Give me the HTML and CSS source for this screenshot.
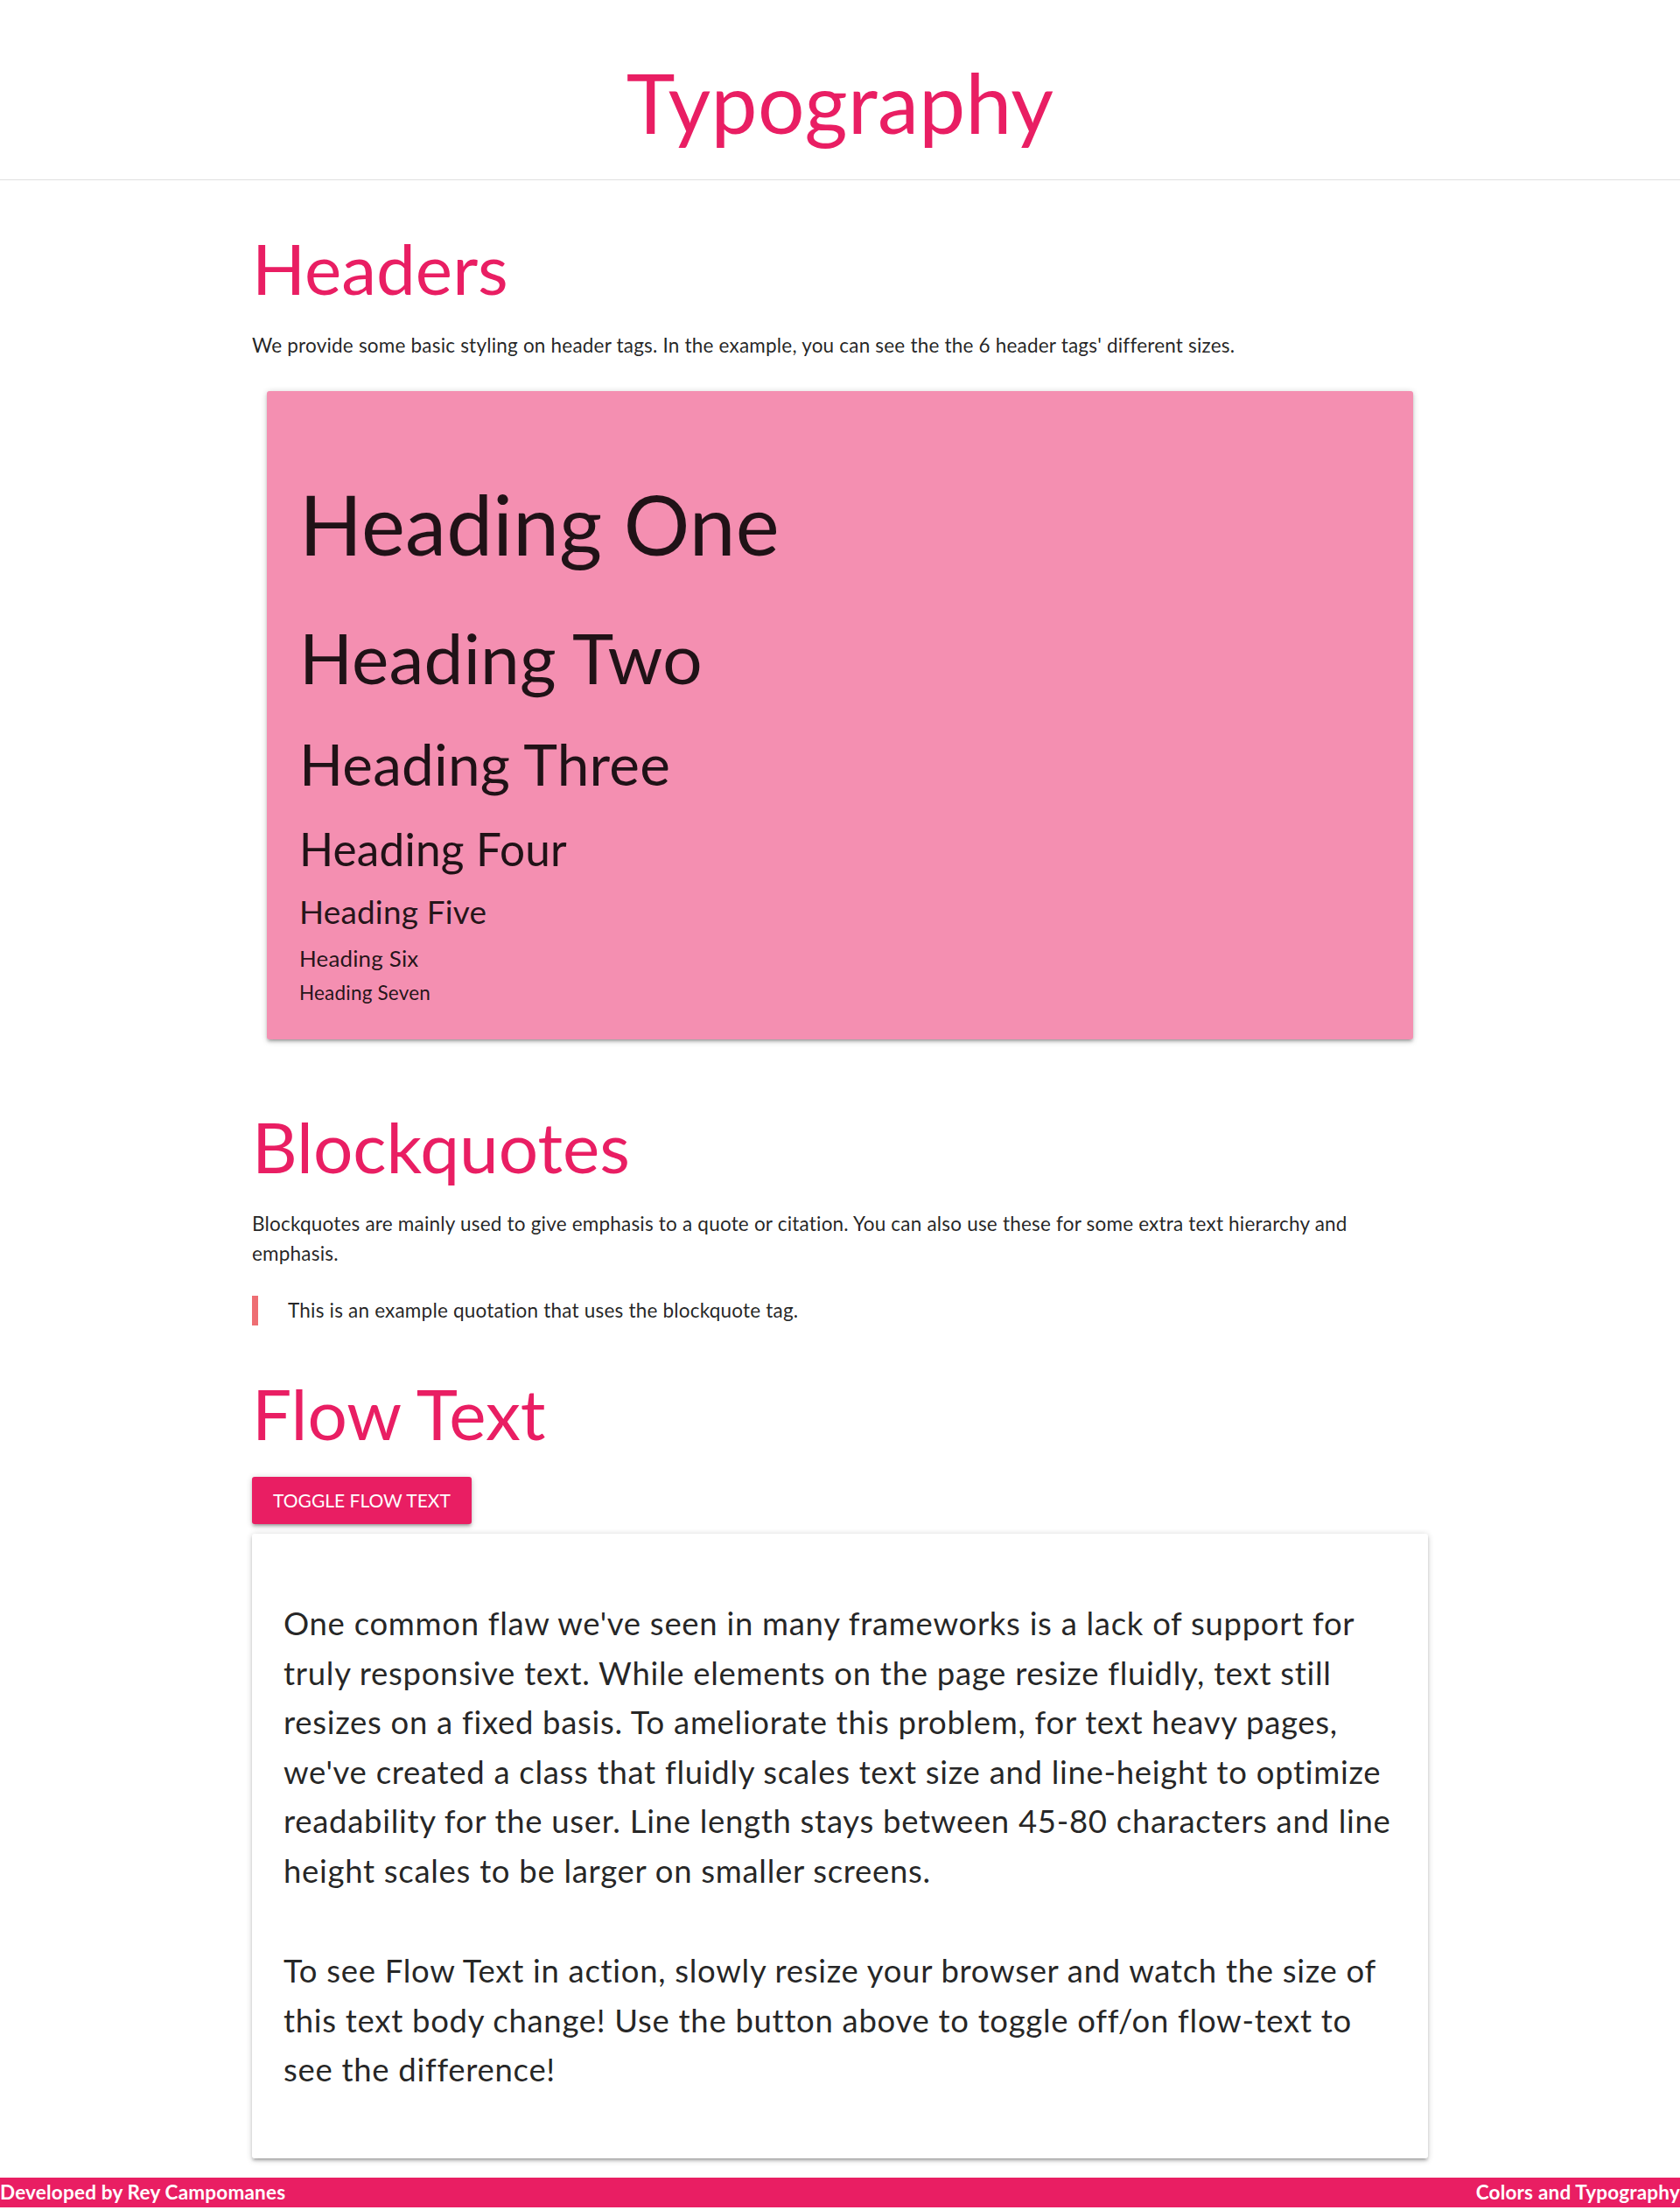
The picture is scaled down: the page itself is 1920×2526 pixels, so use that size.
FILE: index.html
```html
<!DOCTYPE html>
<html lang="en">
<head>
<meta charset="utf-8">
<title>Typography</title>
<link rel="stylesheet" href="styles.css">
</head>
<body>
<header class="page-header">
  <h1 class="page-title">Typography</h1>
</header>
<main class="container">
  <h2 class="section-title first">Headers</h2>
  <p class="intro">We provide some basic styling on header tags. In the example, you can see the the 6 header tags' different sizes.</p>
  <div class="sample-card">
    <h1 class="sample s1">Heading One</h1>
    <h2 class="sample s2">Heading Two</h2>
    <h3 class="sample s3">Heading Three</h3>
    <h4 class="sample s4">Heading Four</h4>
    <h5 class="sample s5">Heading Five</h5>
    <h6 class="sample s6">Heading Six</h6>
    <div class="sample s7">Heading Seven</div>
  </div>

  <h2 class="section-title quotes">Blockquotes</h2>
  <p class="intro">Blockquotes are mainly used to give emphasis to a quote or citation. You can also use these for some extra text hierarchy and emphasis.</p>
  <blockquote class="quote">This is an example quotation that uses the blockquote tag.</blockquote>

  <h2 class="section-title flow">Flow Text</h2>
  <button class="btn" type="button">Toggle Flow Text</button>
  <div class="flow-card">
    <p class="flow-text p1">One common flaw we've seen in many frameworks is a lack of support for truly responsive text. While elements on the page resize fluidly, text still resizes on a fixed basis. To ameliorate this problem, for text heavy pages, we've created a class that fluidly scales text size and line-height to optimize readability for the user. Line length stays between 45-80 characters and line height scales to be larger on smaller screens.</p>
    <p class="flow-text p2">To see Flow Text in action, slowly resize your browser and watch the size of this text body change! Use the button above to toggle off/on flow-text to see the difference!</p>
  </div>
</main>
<footer class="site-footer">
  <span>Developed by Rey Campomanes</span>
  <span>Colors and Typography</span>
</footer>
</body>
</html>
```
FILE: styles.css
```css
html, body {
  margin: 0;
  padding: 0;
  background: #fff;
}
body {
  font-family: "Lato", "Open Sans", sans-serif;
  font-size: 22.5px;
  line-height: 33.75px;
  letter-spacing: 0.2px;
  color: rgba(0, 0, 0, 0.87);
}
h1, h2, h3, h4, h5, h6, p, blockquote {
  margin: 0;
  font-weight: 400;
}

.page-header {
  padding: 65.4px 0 35.6px;
  border-bottom: 1px solid #e0e0e0;
  text-align: center;
}
.page-title {
  font-size: 94.5px;
  line-height: 104px;
  letter-spacing: 0.3px;
  color: #e91e63;
}

.container {
  width: 1344px;
  margin: 0 auto;
  display: flex;
  flex-direction: column;
}

.section-title {
  font-size: 80.1px;
  line-height: 88px;
  letter-spacing: 0;
  color: #e91e63;
}
.section-title.first { margin-top: 56px; }
.section-title.quotes { margin-top: 78px; }
.section-title.flow { margin-top: 55.85px; }

.intro {
  margin-top: 28.4px;
}

.sample-card {
  margin: 34.85px 17px 0;
  padding: 36px 37px 35.8px;
  background: #f48fb1;
  border-radius: 3px;
  box-shadow: 0 3px 3px 0 rgba(0,0,0,.14), 0 4.5px 1.5px -3px rgba(0,0,0,.12), 0 1.5px 7.5px 0 rgba(0,0,0,.2);
  display: flex;
  flex-direction: column;
}
.sample { color: rgba(0, 0, 0, 0.87); letter-spacing: 0.2px; }
.s1 { font-size: 94.5px; line-height: 104px; margin-top: 64.4px; }
.s2 { font-size: 80.1px; line-height: 88.1px; margin-top: 55.6px; }
.s3 { font-size: 65.7px; line-height: 72.3px; margin-top: 42.4px; }
.s4 { font-size: 51.3px; line-height: 56.4px; margin-top: 32.3px; }
.s5 { font-size: 36.9px; line-height: 40.6px; margin-top: 24px; }
.s6 { font-size: 25.9px; line-height: 28.5px; margin-top: 17.8px; }
.s7 { font-size: 22.5px; line-height: 33.75px; margin-top: 9px; }

.quote {
  margin-top: 31.5px;
  border-left: 7px solid #ee6e73;
  padding-left: 34px;
}

.btn {
  align-self: flex-start;
  margin-top: 29px;
  height: 54px;
  padding: 0 24px;
  border: none;
  border-radius: 3px;
  background: #e91e63;
  color: #fff;
  font-family: inherit;
  font-size: 21px;
  line-height: 54px;
  text-transform: uppercase;
  letter-spacing: 0;
  box-shadow: 0 3px 3px 0 rgba(0,0,0,.14), 0 4.5px 1.5px -3px rgba(0,0,0,.12), 0 1.5px 7.5px 0 rgba(0,0,0,.2);
  cursor: pointer;
}

.flow-card {
  margin-top: 11px;
  padding: 36px 36px;
  background: #fff;
  border-radius: 3px;
  box-shadow: 0 3px 3px 0 rgba(0,0,0,.14), 0 4.5px 1.5px -3px rgba(0,0,0,.12), 0 1.5px 7.5px 0 rgba(0,0,0,.2);
}
.flow-text {
  font-size: 36.5px;
  line-height: 56.5px;
  letter-spacing: 0.7px;
}
.flow-text.p1 { margin-top: 38.6px; }
.flow-text.p2 { margin-top: 58px; margin-bottom: 36.9px; }

.site-footer {
  margin-top: 22px;
  height: 34px;
  background: #e91e63;
  color: #fff;
  font-weight: 700;
  font-size: 22.5px;
  line-height: 34px;
  letter-spacing: 0.2px;
  display: flex;
  justify-content: space-between;
}
```
